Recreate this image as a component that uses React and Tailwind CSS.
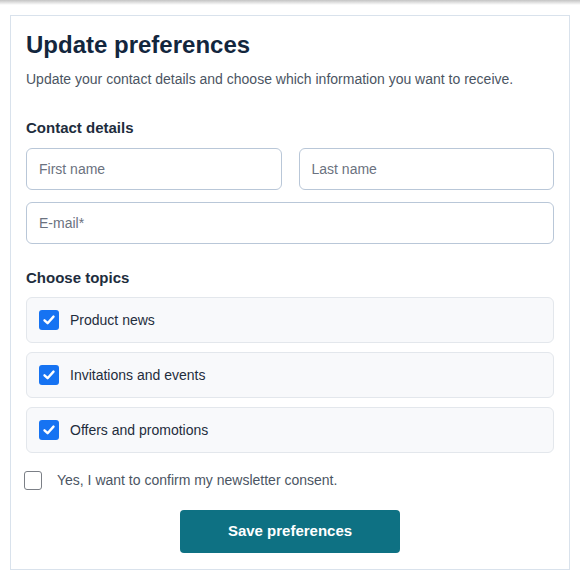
import React from 'react';

const topics = ['Product news', 'Invitations and events', 'Offers and promotions'];

const Check = () => (
  <span className="w-5 h-5 rounded-[3px] bg-[#1673f2] flex items-center justify-center shrink-0">
    <svg width="14" height="14" viewBox="0 0 14 14" fill="none">
      <path d="M2.5 7.3 L5.6 10.2 L11.5 3.6" stroke="white" strokeWidth="2.4" strokeLinecap="round" strokeLinejoin="round" />
    </svg>
  </span>
);

const Field = ({ placeholder }) => (
  <div className="h-[42px] rounded-md border border-[#b9c7d8] bg-white flex items-center px-3 text-[14px] text-[#6b7280] w-full">
    {placeholder}
  </div>
);

export default function App() {
  return (
    <div className="w-[580px] h-[586px] bg-white font-['Liberation_Sans',Arial,sans-serif]">
      <div className="h-[5px] bg-gradient-to-b from-[#c4c4c4] to-white" />
      <div className="mx-[10px] mt-[10px] border border-[#d9e2ec] px-[15px] pt-[15px] pb-[16px]">
        <h1 className="text-[24px] leading-[28px] font-bold text-[#13263d]">Update preferences</h1>
        <p className="mt-[10px] text-[14px] leading-[20px] text-[#4b5563]">
          Update your contact details and choose which information you want to receive.
        </p>

        <h2 className="mt-[29px] text-[15px] leading-[20px] font-bold text-[#1e2d3d]">Contact details</h2>
        <div className="mt-[10px] flex flex-col gap-[12px]">
          <div className="grid grid-cols-2 gap-[17px]">
            <Field placeholder="First name" />
            <Field placeholder="Last name" />
          </div>
          <Field placeholder="E-mail*" />
        </div>

        <h2 className="mt-[24px] text-[15px] leading-[20px] font-bold text-[#1e2d3d]">Choose topics</h2>
        <div className="mt-[9px] flex flex-col gap-[9px]">
          {topics.map((t) => (
            <div key={t} className="h-[46px] rounded-md border border-[#e3e7ec] bg-[#f8f9fb] flex items-center gap-[11px] pl-[12px]">
              <Check />
              <span className="text-[14px] text-[#1f2d3d]">{t}</span>
            </div>
          ))}
        </div>

        <label className="mt-[17px] flex items-center gap-[15px] -ml-[2px]">
          <span className="w-[18px] h-[19px] rounded-[3px] border border-[#7b7f86] bg-white shrink-0" />
          <span className="text-[14px] text-[#4b5563]">Yes, I want to confirm my newsletter consent.</span>
        </label>

        <div className="mt-[19px] flex justify-center">
          <button className="w-[220px] h-[43px] rounded-[4px] bg-[#0e7183] text-white text-[15px] font-bold">
            Save preferences
          </button>
        </div>
      </div>
    </div>
  );
}
